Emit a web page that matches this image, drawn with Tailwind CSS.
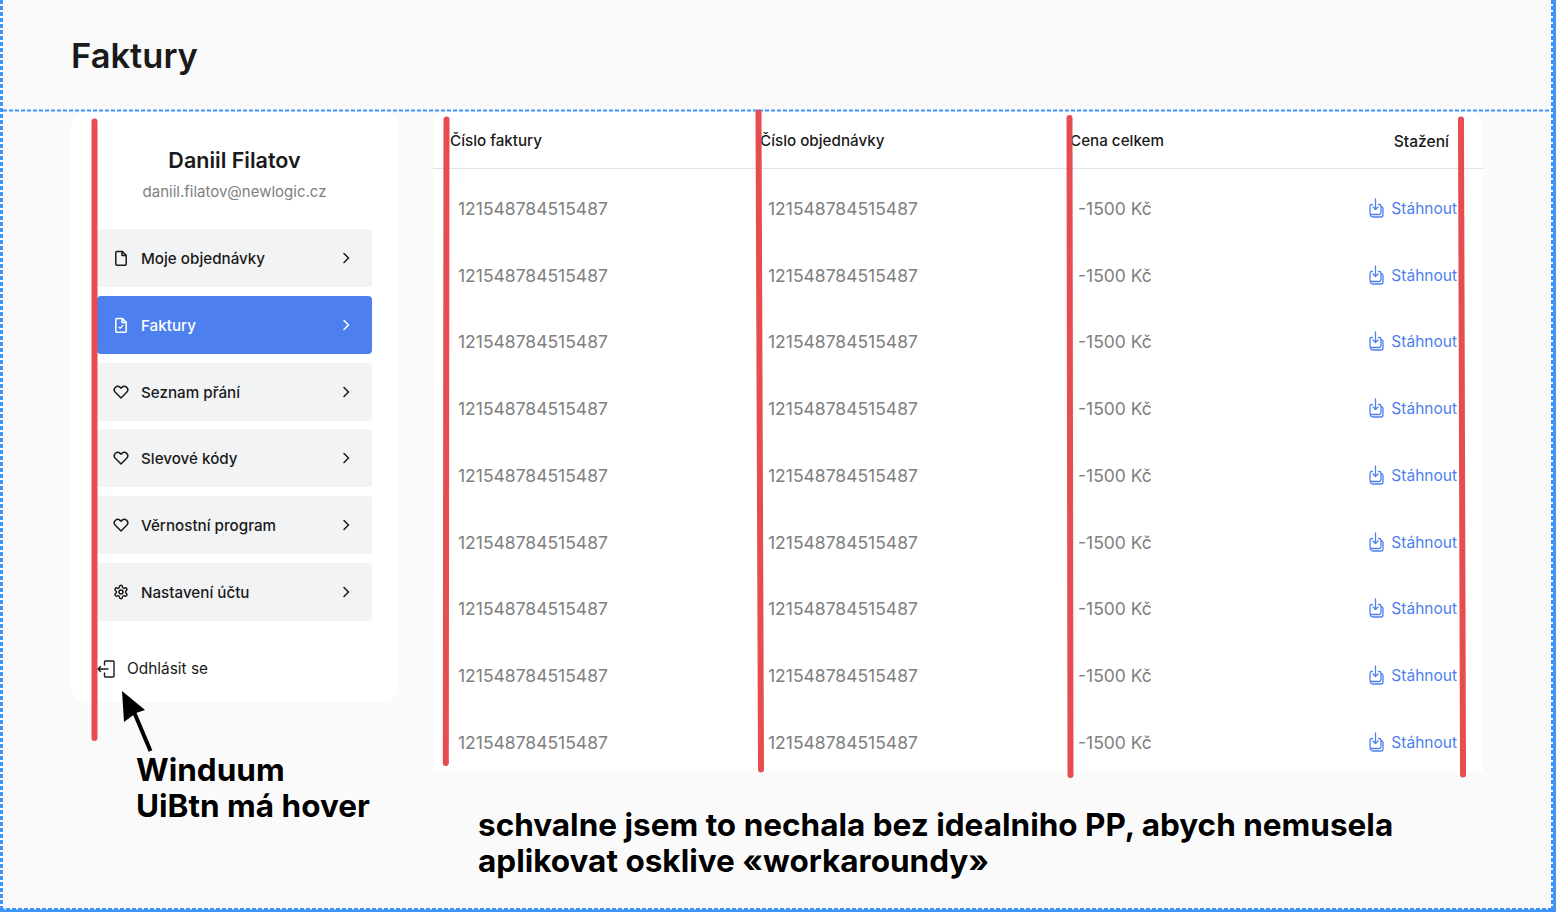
<!DOCTYPE html>
<html lang="cs">
<head>
    <meta charset="UTF-8">
    <title>Faktury</title>
    <script src="https://cdn.jsdelivr.net/npm/@tailwindcss/browser@4"></script>
</head>
<body class="bg-[#fafafa] font-['Inter',sans-serif] text-[#1a1a1a]">
<div class="relative h-[912px] w-[1556px] overflow-hidden">

    <!-- Header -->
    <header class="h-[111px] pl-[71px] pt-[35px]">
        <h1 class="text-[34.500px] leading-[42px] font-semibold">Faktury</h1>
    </header>

    <main class="flex items-start pl-[71px]">
        <!-- Sidebar -->
        <aside class="h-[591px] w-[327px] rounded-2xl bg-white px-[26px] pt-[35px]">
            <div class="text-center text-[21.500px] leading-[28px] font-semibold">Daniil Filatov</div>
            <div class="mt-[7px] text-center text-[15px] leading-[22px] text-[#808080]">daniil.filatov@newlogic.cz</div>
            <nav class="mt-[26px] flex flex-col gap-[8.750px]">
                <a class="flex h-[58px] items-center rounded bg-[#f2f3f5] pl-[16px] pr-[18px] text-[15.200px] font-medium">
                    <svg class="h-4 w-4" viewBox="0 0 16 16" fill="none" stroke="currentColor" stroke-width="1.500" stroke-linejoin="round"><path d="M2.800 2.400c0-.6.4-1 1-1h5.400l4 4v8.800c0 .6-.4 1-1 1H3.800c-.6 0-1-.4-1-1z"/><path d="M9 1.500v4h4"/></svg>
                    <span class="ml-[12px] flex-1 pt-[3px]">Moje objednávky</span>
                    <svg class="h-4 w-4" viewBox="0 0 16 16" fill="none" stroke="currentColor" stroke-width="1.500" stroke-linecap="round" stroke-linejoin="round"><path d="M6 3.500 10.500 8 6 12.500"/></svg>
                </a>
                <a class="flex h-[58px] items-center rounded bg-[#4d80ee] pl-[16px] pr-[18px] text-[15.200px] font-medium text-white">
                    <svg class="h-4 w-4" viewBox="0 0 16 16" fill="none" stroke="currentColor" stroke-width="1.500" stroke-linejoin="round"><path d="M2.800 2.400c0-.6.4-1 1-1h5.400l4 4v8.800c0 .6-.4 1-1 1H3.800c-.6 0-1-.4-1-1z"/><path d="M9 1.500v4h4"/><path stroke-width="1.200" d="m5.600 9.800 1.600 1.600 3-3.200"/></svg>
                    <span class="ml-[12px] flex-1 pt-[3px]">Faktury</span>
                    <svg class="h-4 w-4" viewBox="0 0 16 16" fill="none" stroke="currentColor" stroke-width="1.500" stroke-linecap="round" stroke-linejoin="round"><path d="M6 3.500 10.500 8 6 12.500"/></svg>
                </a>
                <a class="flex h-[58px] items-center rounded bg-[#f2f3f5] pl-[16px] pr-[18px] text-[15.200px] font-medium">
                    <svg class="h-4 w-4" viewBox="0 0 16 16" fill="none" stroke="currentColor" stroke-width="1.500" stroke-linejoin="round"><path d="M8 14 2.300 8.300a3.500 3.500 0 0 1 0-4.900 3.400 3.400 0 0 1 4.800 0l.9.900.9-.9a3.400 3.400 0 0 1 4.800 0 3.500 3.500 0 0 1 0 4.900z"/></svg>
                    <span class="ml-[12px] flex-1 pt-[3px]">Seznam přání</span>
                    <svg class="h-4 w-4" viewBox="0 0 16 16" fill="none" stroke="currentColor" stroke-width="1.500" stroke-linecap="round" stroke-linejoin="round"><path d="M6 3.500 10.500 8 6 12.500"/></svg>
                </a>
                <a class="flex h-[58px] items-center rounded bg-[#f2f3f5] pl-[16px] pr-[18px] text-[15.200px] font-medium">
                    <svg class="h-4 w-4" viewBox="0 0 16 16" fill="none" stroke="currentColor" stroke-width="1.500" stroke-linejoin="round"><path d="M8 14 2.300 8.300a3.500 3.500 0 0 1 0-4.900 3.400 3.400 0 0 1 4.800 0l.9.900.9-.9a3.400 3.400 0 0 1 4.800 0 3.500 3.500 0 0 1 0 4.900z"/></svg>
                    <span class="ml-[12px] flex-1 pt-[3px]">Slevové kódy</span>
                    <svg class="h-4 w-4" viewBox="0 0 16 16" fill="none" stroke="currentColor" stroke-width="1.500" stroke-linecap="round" stroke-linejoin="round"><path d="M6 3.500 10.500 8 6 12.500"/></svg>
                </a>
                <a class="flex h-[58px] items-center rounded bg-[#f2f3f5] pl-[16px] pr-[18px] text-[15.200px] font-medium">
                    <svg class="h-4 w-4" viewBox="0 0 16 16" fill="none" stroke="currentColor" stroke-width="1.500" stroke-linejoin="round"><path d="M8 14 2.300 8.300a3.500 3.500 0 0 1 0-4.900 3.400 3.400 0 0 1 4.800 0l.9.900.9-.9a3.400 3.400 0 0 1 4.800 0 3.500 3.500 0 0 1 0 4.900z"/></svg>
                    <span class="ml-[12px] flex-1 pt-[3px]">Věrnostní program</span>
                    <svg class="h-4 w-4" viewBox="0 0 16 16" fill="none" stroke="currentColor" stroke-width="1.500" stroke-linecap="round" stroke-linejoin="round"><path d="M6 3.500 10.500 8 6 12.500"/></svg>
                </a>
                <a class="flex h-[58px] items-center rounded bg-[#f2f3f5] pl-[16px] pr-[18px] text-[15.200px] font-medium">
                    <svg class="h-4 w-4" viewBox="0 0 24 24" fill="none" stroke="currentColor" stroke-width="2.200" stroke-linecap="round" stroke-linejoin="round"><path d="M12.220 2h-.44a2 2 0 0 0-2 2v.18a2 2 0 0 1-1 1.730l-.43.250a2 2 0 0 1-2 0l-.15-.08a2 2 0 0 0-2.730.730l-.22.380a2 2 0 0 0 .730 2.730l.15.100a2 2 0 0 1 1 1.720v.510a2 2 0 0 1-1 1.740l-.15.090a2 2 0 0 0-.730 2.730l.22.380a2 2 0 0 0 2.730.730l.15-.08a2 2 0 0 1 2 0l.43.250a2 2 0 0 1 1 1.730V20a2 2 0 0 0 2 2h.44a2 2 0 0 0 2-2v-.18a2 2 0 0 1 1-1.730l.43-.250a2 2 0 0 1 2 0l.15.080a2 2 0 0 0 2.730-.730l.22-.390a2 2 0 0 0-.730-2.730l-.15-.080a2 2 0 0 1-1-1.740v-.500a2 2 0 0 1 1-1.740l.15-.090a2 2 0 0 0 .730-2.730l-.22-.380a2 2 0 0 0-2.730-.730l-.15.080a2 2 0 0 1-2 0l-.43-.250a2 2 0 0 1-1-1.730V4a2 2 0 0 0-2-2z"/><circle cx="12" cy="12" r="3"/></svg>
                    <span class="ml-[12px] flex-1 pt-[3px]">Nastavení účtu</span>
                    <svg class="h-4 w-4" viewBox="0 0 16 16" fill="none" stroke="currentColor" stroke-width="1.500" stroke-linecap="round" stroke-linejoin="round"><path d="M6 3.500 10.500 8 6 12.500"/></svg>
                </a>
            </nav>
            <a class="mt-[37px] flex items-center text-[15.400px] leading-[22px]">
                <svg class="h-[18px] w-[18px]" viewBox="0 0 18 18" fill="none" stroke="currentColor" stroke-width="1.400" stroke-linecap="round" stroke-linejoin="round"><path d="M7.500 5V1.900c0-.5.400-.9.900-.9h7.700c.5 0 .9.400.9.900v14.200c0 .5-.4.900-.9.900H8.400c-.5 0-.9-.4-.9-.9V13"/><path d="M11 9H1M3.500 6.500 1 9l2.500 2.500"/></svg>
                <span class="ml-[12px]">Odhlásit se</span>
            </a>
        </aside>

        <!-- Invoices table -->
        <section class="ml-[35px] h-[661px] w-[1050px] rounded-t-2xl bg-white">
            <div class="grid h-[58px] grid-cols-[310px_310px_1fr_auto] items-center border-b border-[#e2e2e2] pl-[17px] pr-[34px] pt-[4px] text-[15.200px] font-medium">
                <div>Číslo faktury</div><div>Číslo objednávky</div><div>Cena celkem</div><div class="text-[15.600px]">Stažení</div>
            </div>
            <div id="rows" class="pt-[6px]"></div>
        </section>
    </main>

    <!-- Review annotations drawn over the page -->
    <svg class="absolute left-0 top-0" width="1556" height="912" fill="none">
        <g stroke="#3d96f7" stroke-width="2" stroke-dasharray="4 2">
            <path d="M3 110.500H1550"/>
            <path stroke-width="3" d="M1.500 0V912M1552.500 0V912M0 909.500H1556"/>
        </g>
        <path stroke="#3d96f7" stroke-width="3" d="M1554.500 0V912M0 911H1556"/>
        <g stroke="#e64c50" stroke-width="6" stroke-linecap="round">
            <path d="M94.500 121.500V738"/>
            <path d="M446.500 119.500 445.800 763"/>
            <path d="M758.500 112.500 761 769.500"/>
            <path d="M1069.500 118 1070.500 775"/>
            <path d="M1461 119.500 1463 774.500"/>
        </g>
        <path stroke="#000" stroke-width="4" d="M150.500 751 134 712"/>
        <path fill="#000" d="M122 691 145 710 136 713 124 722z"/>
    </svg>
    <div class="absolute left-[136px] top-[752px] text-[31.500px] leading-[36px] font-bold text-black [text-shadow:0_0_4px_white,0_0_4px_white]">Winduum<br>UiBtn má hover</div>
    <div class="absolute left-[478px] top-[807px] text-[31.500px] leading-[36px] font-bold text-black [text-shadow:0_0_4px_white,0_0_4px_white]">schvalne jsem to nechala bez idealniho PP, abych nemusela<br>aplikovat osklive «workaroundy»</div>
</div>

<script>
    // rows are all the same placeholder invoice
    const row = `<div class="grid h-[66.750px] grid-cols-[310px_310px_1fr_auto] items-center pl-[25px] pr-[26px] text-[17.500px] text-[#808080]">
        <div class="pt-[1px]">121548784515487</div><div class="pt-[1px]">121548784515487</div><div class="pt-[1px]">-1500 Kč</div>
        <div class="flex h-[20px] items-center text-[15.500px] text-[#4d80ee]">
            <svg class="mr-[6px] h-[21px] w-[17px]" viewBox="0 0 17 21" fill="none" stroke="currentColor" stroke-width="1.300" stroke-linecap="round" stroke-linejoin="round"><path d="M7.500 1v10.500M5 9l2.500 2.500L10 9"/><path d="M4.500 6.500H3.800C2.800 6.500 2 7.300 2 8.300v6.400c0 1 .8 1.800 1.800 1.800h7.400c1 0 1.800-.8 1.800-1.800V8.300c0-1-.8-1.800-1.800-1.800h-.7"/><path d="M2.300 16.500c.2 1.500 1 2.500 2.500 2.500h8c1.300 0 2.200-1 2.200-2.200V10.500c0-.9-.7-1.700-2-1.900"/></svg>
            Stáhnout
        </div>
    </div>`;
    document.getElementById("rows").innerHTML = row.repeat(9);
</script>
</body>
</html>
